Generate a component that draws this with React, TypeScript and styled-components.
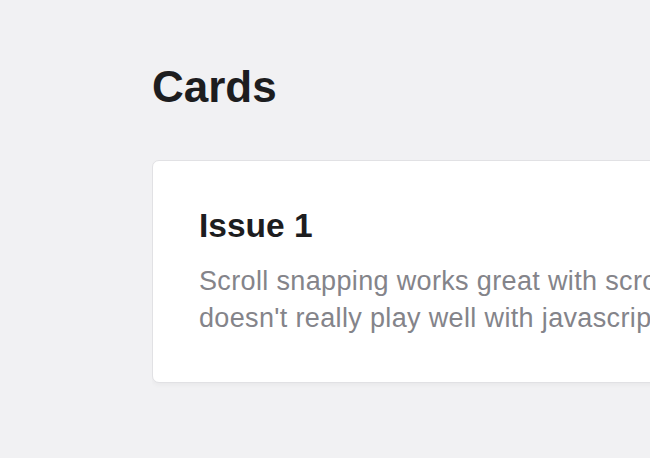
import styled, { createGlobalStyle } from "styled-components";

const GlobalStyle = createGlobalStyle`
  html, body {
    margin: 0;
    padding: 0;
    background: #f1f1f3;
    overflow: hidden;
  }
  body {
    font-family: "Liberation Sans", Arial, Helvetica, sans-serif;
    -webkit-font-smoothing: antialiased;
  }
`;

const PageStyled = styled.main`
  min-height: 100vh;
  padding: 61px 0 0 152px;
  box-sizing: border-box;
`;

const HeadingStyled = styled.h1`
  margin: 0 0 46px;
  font-size: 44px;
  line-height: 1.2;
  font-weight: 700;
  color: #1d1d1f;
`;

const TrackStyled = styled.div`
  display: flex;
  gap: 24px;
  overflow: hidden;
  padding-bottom: 8px;
`;

const CardStyled = styled.article`
  flex: 0 0 auto;
  width: 772px;
  box-sizing: border-box;
  padding: 44px 46px 45px;
  background: #ffffff;
  border: 1px solid #e1e1e4;
  border-radius: 7px;
  box-shadow: 0 2px 5px rgba(0, 0, 0, 0.04);
`;

const CardTitleStyled = styled.h2`
  margin: 0;
  font-size: 33.5px;
  line-height: 41px;
  font-weight: 700;
  color: #1d1d1f;
`;

const CardTextStyled = styled.p`
  margin: 17px 0 0;
  font-size: 27px;
  line-height: 37px;
  letter-spacing: 0.35px;
  color: #84848a;
`;

const issues = [
  {
    title: "Issue 1",
    text: "Scroll snapping works great with scroll wheels, but it doesn't really play well with javascript driven scrolling.",
  },
  {
    title: "Issue 2",
    text: "Cards keep their own width, so the track overflows and the next card peeks in from the side.",
  },
];

export default function App() {
  return (
    <>
      <GlobalStyle />
      <PageStyled>
        <HeadingStyled>Cards</HeadingStyled>
        <TrackStyled>
          {issues.map((issue) => (
            <CardStyled key={issue.title}>
              <CardTitleStyled>{issue.title}</CardTitleStyled>
              <CardTextStyled>{issue.text}</CardTextStyled>
            </CardStyled>
          ))}
        </TrackStyled>
      </PageStyled>
    </>
  );
}
